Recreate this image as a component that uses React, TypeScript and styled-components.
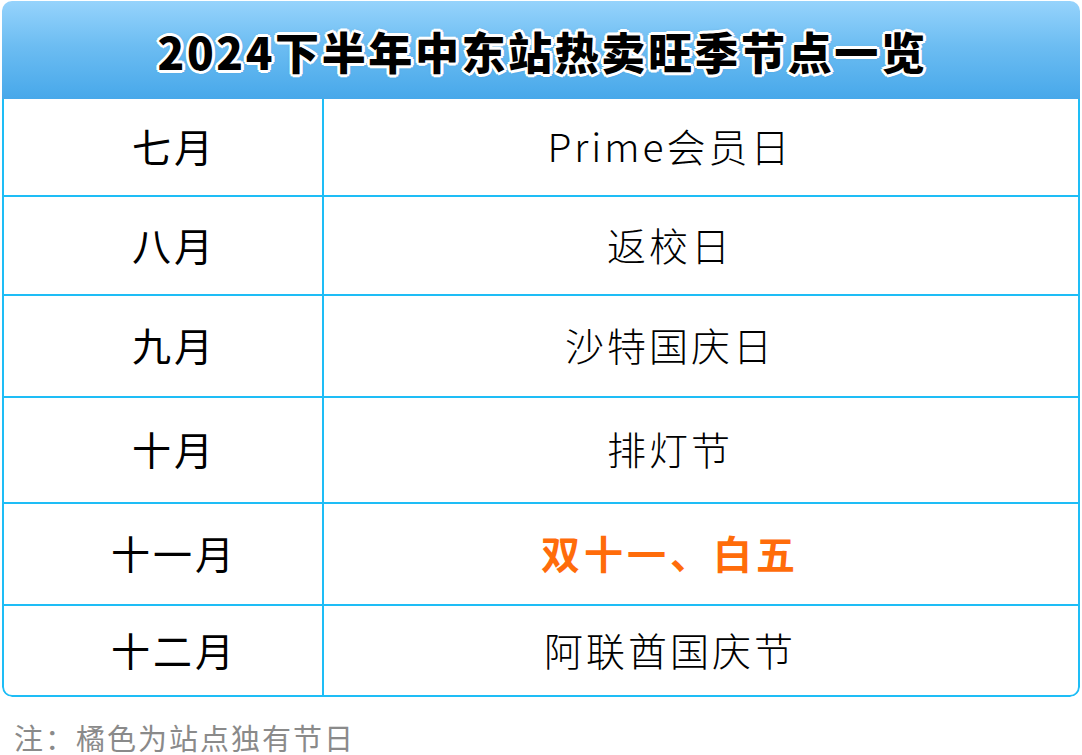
import { createGlobalStyle } from 'styled-components'
import styled from 'styled-components'

type Item = {
  month: string
  festival: string
  hot?: boolean
  h: number
}

const items: Item[] = [
  { month: '七月', festival: 'Prime会员日', h: 98 },
  { month: '八月', festival: '返校日', h: 99 },
  { month: '九月', festival: '沙特国庆日', h: 102 },
  { month: '十月', festival: '排灯节', h: 106 },
  { month: '十一月', festival: '双十一、白五', hot: true, h: 102 },
  { month: '十二月', festival: '阿联酋国庆节', h: 89 },
]

const Global = createGlobalStyle`
  html, body {
    margin: 0;
    padding: 0;
    background: #fff;
  }
  body {
    font-family: "Noto Sans CJK SC", "Noto Sans", sans-serif;
  }
`

const App = () => (
  <>
    <Global />
    <Page>
      <Table>
        <Header>
          <Title>2024下半年中东站热卖旺季节点一览</Title>
        </Header>
        <Body>
          {items.map((it, i) => (
            <Row key={it.month} h={it.h} last={i === items.length - 1}>
              <Month>{it.month}</Month>
              <Festival hot={it.hot}>{it.festival}</Festival>
            </Row>
          ))}
        </Body>
      </Table>
      <Note>注：橘色为站点独有节日</Note>
    </Page>
  </>
)
export default App

const Page = styled.div`
  width: 1082px;
  height: 755px;
  padding: 1px 2px 0 2px;
  box-sizing: border-box;
  overflow: hidden;
`
const Table = styled.div`
  width: 1078px;
  border-radius: 10px;
  overflow: hidden;
`
const Header = styled.div`
  height: 98px;
  display: flex;
  align-items: center;
  justify-content: center;
  background: linear-gradient(180deg, #96d3fc 0%, #6dbdf2 45%, #47a8ea 100%);
`
const Title = styled.h1`
  margin: 0;
  font-size: 44px;
  font-weight: 900;
  letter-spacing: 2.6px;
  color: #000;
  line-height: 1;
  padding: 2px 0 0 3px;
  text-shadow:
    2px 0 0 #fff, -2px 0 0 #fff, 0 2px 0 #fff, 0 -2px 0 #fff,
    2px 2px 0 #fff, -2px -2px 0 #fff, 2px -2px 0 #fff, -2px 2px 0 #fff,
    3px 0 0 #fff, -3px 0 0 #fff, 0 3px 0 #fff, 0 -3px 0 #fff,
    0 0 4px rgba(0, 0, 0, 0.35);
`
const Body = styled.div`
  border: 2px solid #1ebdf6;
  border-top: none;
  border-radius: 0 0 10px 10px;
`
const Row = styled.div<{ h: number; last?: boolean }>`
  display: grid;
  grid-template-columns: 320px 1fr;
  height: ${p => p.h}px;
  box-sizing: border-box;
  border-bottom: ${p => (p.last ? 'none' : '2px solid #1ebdf6')};
`
const Cell = styled.div`
  display: flex;
  align-items: center;
  justify-content: center;
  font-size: 39px;
  color: #000;
  padding-bottom: 4px;
`
const Month = styled(Cell)`
  font-weight: 400;
  letter-spacing: 3px;
  padding-left: 22px;
  border-right: 2px solid #1ebdf6;
`
const Festival = styled(Cell)<{ hot?: boolean }>`
  font-weight: ${p => (p.hot ? 700 : 300)};
  color: ${p => (p.hot ? '#ff6c0a' : '#000')};
  letter-spacing: ${p => (p.hot ? 4 : 3)}px;
  padding-right: 62px;
`
const Note = styled.div`
  margin: 23px 0 0 12px;
  font-size: 29px;
  letter-spacing: 2px;
  color: #8a8a8a;
  line-height: 1.2;
`
